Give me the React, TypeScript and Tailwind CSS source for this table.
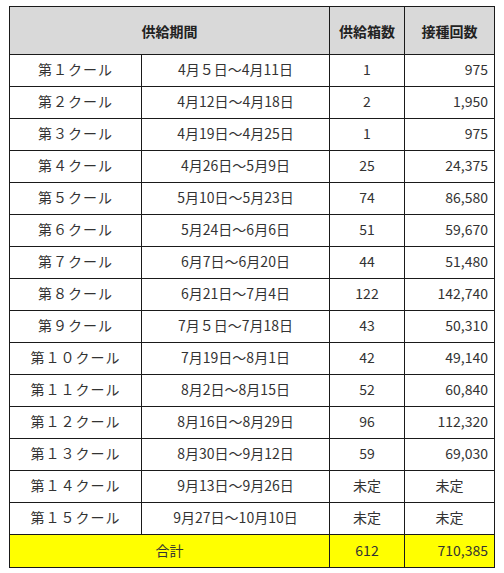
const rows: [string, string, string, string][] = [
  ['第１クール', '4月５日～4月11日', '1', '975'],
  ['第２クール', '4月12日～4月18日', '2', '1,950'],
  ['第３クール', '4月19日～4月25日', '1', '975'],
  ['第４クール', '4月26日～5月9日', '25', '24,375'],
  ['第５クール', '5月10日～5月23日', '74', '86,580'],
  ['第６クール', '5月24日～6月6日', '51', '59,670'],
  ['第７クール', '6月7日～6月20日', '44', '51,480'],
  ['第８クール', '6月21日～7月4日', '122', '142,740'],
  ['第９クール', '7月５日～7月18日', '43', '50,310'],
  ['第１０クール', '7月19日～8月1日', '42', '49,140'],
  ['第１１クール', '8月2日～8月15日', '52', '60,840'],
  ['第１２クール', '8月16日～8月29日', '96', '112,320'],
  ['第１３クール', '8月30日～9月12日', '59', '69,030'],
  ['第１４クール', '9月13日～9月26日', '未定', '未定'],
  ['第１５クール', '9月27日～10月10日', '未定', '未定'],
];

const cell = 'border border-[#1a1a1a] px-[6px]';

export default function App() {
  return (
    <div className="min-h-screen bg-white pl-[9px] pt-[6px] font-['Noto_Sans_CJK_JP','Noto_Sans',sans-serif] text-[14px] leading-none text-[#333]">
      <table className="w-[485px] table-fixed border-collapse">
        <colgroup>
          <col className="w-[132px]" />
          <col className="w-[188px]" />
          <col className="w-[75px]" />
          <col className="w-[90px]" />
        </colgroup>
        <thead>
          <tr className="h-[48px] bg-[#d9d9d9] font-bold text-[#222]">
            <th colSpan={2} className={`${cell} text-center`}>供給期間</th>
            <th className={`${cell} text-center`}>供給箱数</th>
            <th className={`${cell} text-center`}>接種回数</th>
          </tr>
        </thead>
        <tbody>
          {rows.map(([label, period, boxes, shots]) => {
            const undecided = shots === '未定';
            return (
              <tr key={label} className="h-[32px]">
                <td className={`${cell} pb-[4px] text-center tracking-[1px]`}>{label}</td>
                <td className={`${cell} pb-[4px] text-center`}>{period}</td>
                <td className={`${cell} pb-[4px] text-center`}>{boxes}</td>
                <td className={`${cell} pb-[4px] ${undecided ? 'text-center' : 'text-right'}`}>{shots}</td>
              </tr>
            );
          })}
          <tr className="h-[33px] bg-[#ffff00]">
            <td colSpan={2} className={`${cell} pb-[3px] text-center`}>合計</td>
            <td className={`${cell} pb-[3px] text-center`}>612</td>
            <td className={`${cell} pb-[3px] text-right`}>710,385</td>
          </tr>
        </tbody>
      </table>
    </div>
  );
}
